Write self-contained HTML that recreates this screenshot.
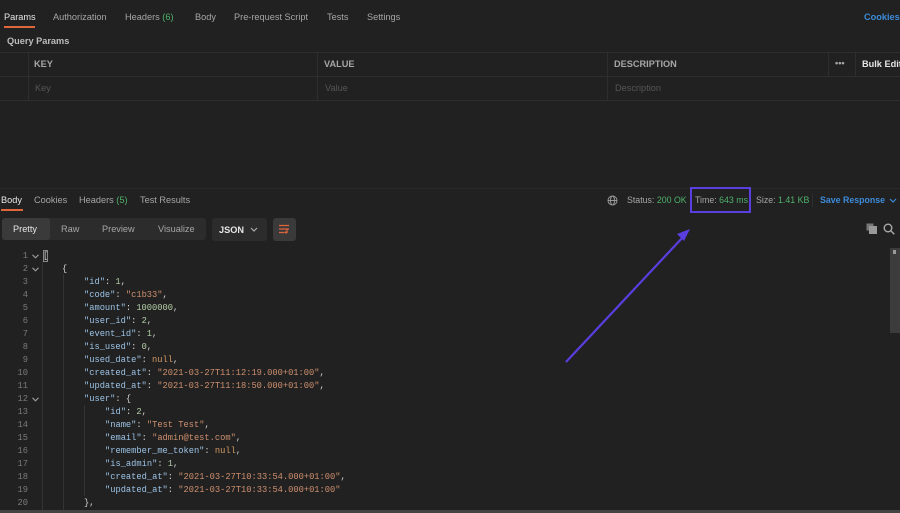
<!DOCTYPE html>
<html><head><meta charset="utf-8"><style>
*{margin:0;padding:0;box-sizing:border-box}
body{width:900px;height:513px;background:#212121;overflow:hidden;position:relative;font-family:"Liberation Sans",sans-serif;font-size:9.2px;color:#a6a6a6}
.a{position:absolute;white-space:nowrap}
.hl{position:absolute;background:#2e2e2e}
.vl{position:absolute;background:#2e2e2e;width:1px}
.w{color:#e6e6e6}
.g{color:#4fb26a}
.b{color:#3d8bd9}
.sm{font-size:8.8px}
.code{position:absolute;font-family:"Liberation Mono",monospace;font-size:8.73px;color:#d4d4d4;white-space:pre}
.ln{position:absolute;width:28px;text-align:right;font-family:"Liberation Mono",monospace;font-size:8.73px;color:#7a7a7a}
.k{color:#9cc3e6}.s{color:#ce8f6e}.n{color:#b5cea8}.nu{color:#d19a66}
.cv{position:absolute;left:32px;width:7px;height:5px}
</style></head><body>
<div class="a w" style="left:4px;top:12px">Params</div>
<div class="a" style="left:4px;top:26px;width:31px;height:2px;background:#e0663b"></div>
<div class="a" style="left:53px;top:12px">Authorization</div>
<div class="a" style="left:125px;top:12px">Headers <span class="g">(6)</span></div>
<div class="a" style="left:195px;top:12px">Body</div>
<div class="a" style="left:234px;top:12px">Pre-request Script</div>
<div class="a" style="left:327px;top:12px">Tests</div>
<div class="a" style="left:367px;top:12px">Settings</div>
<div class="a b" style="left:864px;top:12px;font-weight:bold">Cookies</div>
<div class="a" style="left:7px;top:36px;font-weight:bold;color:#bdbdbd">Query Params</div>
<div class="hl" style="left:0;top:52px;width:900px;height:1px"></div>
<div class="hl" style="left:0;top:76px;width:900px;height:1px"></div>
<div class="hl" style="left:0;top:100px;width:900px;height:1px"></div>
<div class="vl" style="left:28px;top:52px;height:48px"></div>
<div class="vl" style="left:317px;top:52px;height:48px"></div>
<div class="vl" style="left:607px;top:52px;height:48px"></div>
<div class="vl" style="left:828px;top:52px;height:24px"></div>
<div class="vl" style="left:855px;top:52px;height:24px"></div>
<div class="a" style="left:34px;top:59px;font-weight:bold">KEY</div>
<div class="a" style="left:324px;top:59px;font-weight:bold">VALUE</div>
<div class="a" style="left:614px;top:59px;font-weight:bold">DESCRIPTION</div>
<div class="a" style="left:835px;top:58px;font-weight:bold">•••</div>
<div class="a w" style="left:862px;top:59px;font-weight:bold">Bulk Edit</div>
<div class="a" style="left:35px;top:83px;color:#555">Key</div>
<div class="a" style="left:325px;top:83px;color:#555">Value</div>
<div class="a" style="left:615px;top:83px;color:#555">Description</div>
<div class="hl" style="left:0;top:188px;width:900px;height:1px;background:#2a2a2a"></div>
<div class="a w" style="left:1px;top:195px">Body</div>
<div class="a" style="left:1px;top:209px;width:22px;height:2px;background:#e0663b"></div>
<div class="a" style="left:34px;top:195px">Cookies</div>
<div class="a" style="left:79px;top:195px">Headers <span class="g">(5)</span></div>
<div class="a" style="left:140px;top:195px">Test Results</div>
<svg class="a" style="left:607px;top:195px" width="11" height="11" viewBox="0 0 11 11" fill="none" stroke="#999" stroke-width="1"><circle cx="5.5" cy="5.5" r="4.5"/><ellipse cx="5.5" cy="5.5" rx="2" ry="4.5"/><path d="M1 5.5h9"/></svg>
<div class="a sm" style="left:627px;top:195px">Status: <span class="g">200 OK</span></div>
<div class="a sm" style="left:695px;top:195px">Time: <span class="g">643 ms</span></div>
<div class="a" style="left:690px;top:187px;width:61px;height:26px;border:2px solid #5b3ee0"></div>
<div class="a sm" style="left:756px;top:195px">Size: <span class="g">1.41 KB</span></div>
<div class="vl" style="left:812px;top:193px;height:14px"></div>
<div class="a b sm" style="left:820px;top:195px;font-weight:bold">Save Response</div>
<svg class="a" style="left:889px;top:198px" width="8" height="6" viewBox="0 0 8 6" fill="none" stroke="#3d8bd9" stroke-width="1.2"><path d="M1 1l3 3 3-3"/></svg>
<div class="a" style="left:2px;top:218px;width:204px;height:22px;background:#2c2c2c;border-radius:3px"></div>
<div class="a" style="left:2px;top:218px;width:48px;height:22px;background:#3a3a3a;border-radius:3px"></div>
<div class="a w" style="left:13px;top:224px">Pretty</div>
<div class="a" style="left:61px;top:224px">Raw</div>
<div class="a" style="left:102px;top:224px">Preview</div>
<div class="a" style="left:158px;top:224px">Visualize</div>
<div class="a" style="left:212px;top:218px;width:55px;height:23px;background:#2c2c2c;border-radius:3px"></div>
<div class="a w" style="left:219px;top:225px;font-weight:bold">JSON</div>
<svg class="a" style="left:250px;top:227px" width="8" height="6" viewBox="0 0 8 6" fill="none" stroke="#aaa" stroke-width="1.2"><path d="M1 1l3 3 3-3"/></svg>
<div class="a" style="left:273px;top:218px;width:23px;height:23px;background:#3a3a3a;border-radius:3px"></div>
<svg class="a" style="left:278px;top:224px" width="13" height="11" viewBox="0 0 13 11" fill="none" stroke="#e0663b" stroke-width="1.2"><path d="M1 1.5h10M1 5h10M1 8.5h5M9 5.5v3H7M8 7.5l-1 1 1 1"/></svg>
<svg class="a" style="left:866px;top:223px" width="12" height="12" viewBox="0 0 12 12"><rect x="0.5" y="0.5" width="7" height="7" fill="#777"/><rect x="3" y="3" width="8" height="8" fill="#999"/></svg>
<svg class="a" style="left:883px;top:223px" width="12" height="12" viewBox="0 0 12 12" fill="none" stroke="#aaa" stroke-width="1.4"><circle cx="5" cy="5" r="3.8"/><path d="M8 8l3.3 3.3"/></svg>
<div class="a" style="left:890px;top:248px;width:10px;height:85px;background:#3c3c3c"></div>
<div class="a" style="left:893px;top:250px;width:3px;height:4px;background:#999"></div>
<div class="vl" style="left:42px;top:261px;height:249px;background:#333"></div>
<div class="vl" style="left:63px;top:274px;height:236px;background:#333"></div>
<div class="vl" style="left:84px;top:405px;height:91px;background:#333"></div>
<div class="a" style="left:43px;top:250px;width:5px;height:12px;border:1px solid #888"></div>
<div class="a" style="left:0;top:510px;width:900px;height:3px;background:#444"></div>
<svg class="a" style="left:560px;top:225px" width="140" height="145" viewBox="560 225 140 145"><path d="M566 362L684 236" stroke="#5b3ee0" stroke-width="2.2"/><path d="M690 229l-13 5 7 7z" fill="#5b3ee0"/></svg>
<div class="ln" style="top:251px">1</div><svg class="cv" style="top:254px" viewBox="0 0 7 5" fill="none" stroke="#999" stroke-width="1.1"><path d="M.5 .8l3 3 3-3"/></svg>
<div class="ln" style="top:264px">2</div><svg class="cv" style="top:267px" viewBox="0 0 7 5" fill="none" stroke="#999" stroke-width="1.1"><path d="M.5 .8l3 3 3-3"/></svg>
<div class="ln" style="top:277px">3</div><div class="ln" style="top:290px">4</div><div class="ln" style="top:303px">5</div><div class="ln" style="top:316px">6</div><div class="ln" style="top:329px">7</div><div class="ln" style="top:342px">8</div><div class="ln" style="top:355px">9</div><div class="ln" style="top:368px">10</div><div class="ln" style="top:381px">11</div>
<div class="ln" style="top:394px">12</div><svg class="cv" style="top:397px" viewBox="0 0 7 5" fill="none" stroke="#999" stroke-width="1.1"><path d="M.5 .8l3 3 3-3"/></svg>
<div class="ln" style="top:407px">13</div><div class="ln" style="top:420px">14</div><div class="ln" style="top:433px">15</div><div class="ln" style="top:446px">16</div><div class="ln" style="top:459px">17</div><div class="ln" style="top:472px">18</div><div class="ln" style="top:485px">19</div><div class="ln" style="top:498px">20</div>
<div class="code" style="left:43px;top:251px">[</div>
<div class="code" style="left:62px;top:264px">{</div>
<div class="code" style="left:84px;top:277px"><span class="k">"id"</span>: <span class="n">1</span>,</div>
<div class="code" style="left:84px;top:290px"><span class="k">"code"</span>: <span class="s">"c1b33"</span>,</div>
<div class="code" style="left:84px;top:303px"><span class="k">"amount"</span>: <span class="n">1000000</span>,</div>
<div class="code" style="left:84px;top:316px"><span class="k">"user_id"</span>: <span class="n">2</span>,</div>
<div class="code" style="left:84px;top:329px"><span class="k">"event_id"</span>: <span class="n">1</span>,</div>
<div class="code" style="left:84px;top:342px"><span class="k">"is_used"</span>: <span class="n">0</span>,</div>
<div class="code" style="left:84px;top:355px"><span class="k">"used_date"</span>: <span class="nu">null</span>,</div>
<div class="code" style="left:84px;top:368px"><span class="k">"created_at"</span>: <span class="s">"2021-03-27T11:12:19.000+01:00"</span>,</div>
<div class="code" style="left:84px;top:381px"><span class="k">"updated_at"</span>: <span class="s">"2021-03-27T11:18:50.000+01:00"</span>,</div>
<div class="code" style="left:84px;top:394px"><span class="k">"user"</span>: {</div>
<div class="code" style="left:105px;top:407px"><span class="k">"id"</span>: <span class="n">2</span>,</div>
<div class="code" style="left:105px;top:420px"><span class="k">"name"</span>: <span class="s">"Test Test"</span>,</div>
<div class="code" style="left:105px;top:433px"><span class="k">"email"</span>: <span class="s">"admin@test.com"</span>,</div>
<div class="code" style="left:105px;top:446px"><span class="k">"remember_me_token"</span>: <span class="nu">null</span>,</div>
<div class="code" style="left:105px;top:459px"><span class="k">"is_admin"</span>: <span class="n">1</span>,</div>
<div class="code" style="left:105px;top:472px"><span class="k">"created_at"</span>: <span class="s">"2021-03-27T10:33:54.000+01:00"</span>,</div>
<div class="code" style="left:105px;top:485px"><span class="k">"updated_at"</span>: <span class="s">"2021-03-27T10:33:54.000+01:00"</span></div>
<div class="code" style="left:84px;top:498px">},</div>
</body></html>
